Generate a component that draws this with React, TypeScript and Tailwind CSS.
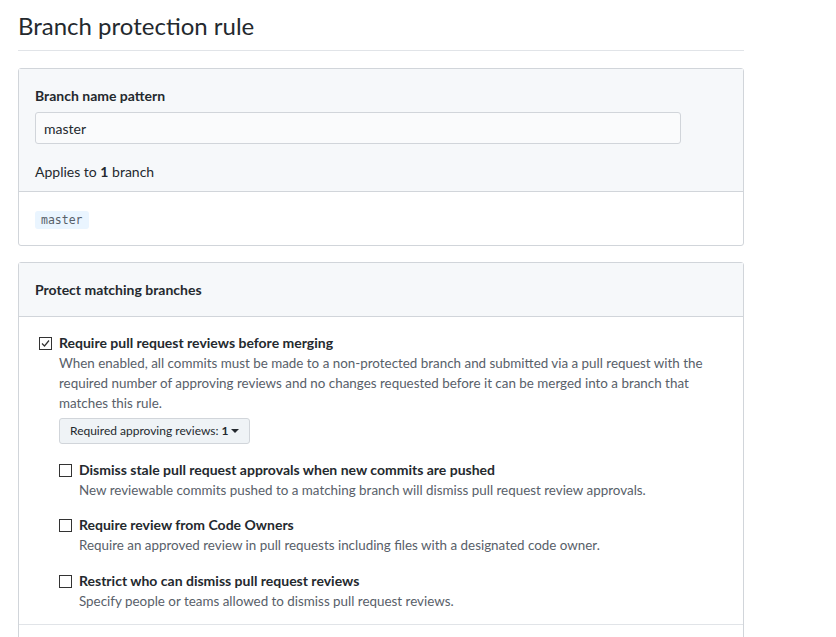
import { useState } from 'react';

const font = { fontFamily: 'Lato, "Noto Sans", "Liberation Sans", sans-serif' };

type Option = {
  title: string;
  note: string;
  gap: string;
};

const subOptions: Option[] = [
  {
    title: 'Dismiss stale pull request approvals when new commits are pushed',
    note: 'New reviewable commits pushed to a matching branch will dismiss pull request review approvals.',
    gap: 'mt-[16px]',
  },
  {
    title: 'Require review from Code Owners',
    note: 'Require an approved review in pull requests including files with a designated code owner.',
    gap: 'mt-[15px]',
  },
  {
    title: 'Restrict who can dismiss pull request reviews',
    note: 'Specify people or teams allowed to dismiss pull request reviews.',
    gap: 'mt-[16px]',
  },
];

const Checkbox = ({ checked }: { checked?: boolean }) => (
  <span className="flex h-[13px] w-[13px] shrink-0 items-center justify-center border border-[#333] bg-white">
    {checked && (
      <svg width="11" height="11" viewBox="0 0 11 11" fill="none">
        <path d="M2 5.5 L4.5 8 L9 2.5" stroke="#333" strokeWidth="1.2" />
      </svg>
    )}
  </span>
);

const App = () => {
  const [pattern, setPattern] = useState('master');

  return (
    <div className="min-h-screen bg-white text-[#24292e]" style={font}>
      <div className="w-[726px] pl-[18px] box-content">
        <h1 className="border-b border-[#e1e4e8] pt-[10px] pb-[8px] text-[24px] leading-[32px] font-normal">
          Branch protection rule
        </h1>

        <div className="mt-[17px] rounded-[3px] border border-[#d1d5da]">
          <div className="border-b border-[#d1d5da] bg-[#f6f8fa] px-4 pt-[16px] pb-[9px]">
            <label className="block text-[14px] leading-[21px] font-bold">Branch name pattern</label>
            <input
              value={pattern}
              onChange={(e) => setPattern(e.target.value)}
              className="mt-[6px] h-[32px] w-[646px] rounded-[3px] border border-[#d1d5da] bg-[#fafbfc] px-2 text-[14px] text-[#24292e] outline-none"
              style={font}
            />
            <p className="mt-[18px] text-[14px] leading-[20px]">
              Applies to <span className="font-bold">1</span> branch
            </p>
          </div>
          <div className="px-4 pt-[19px] pb-[16px]">
            <code
              className="block w-fit rounded-[3px] bg-[#eaf5ff] px-[6px] text-[11.5px] leading-[18px] text-[#586069]"
              style={{ fontFamily: '"DejaVu Sans Mono", "Liberation Mono", monospace' }}
            >
              master
            </code>
          </div>
        </div>

        <div className="mt-[16px] rounded-t-[3px] border border-[#d1d5da]">
          <div className="border-b border-[#d1d5da] bg-[#f6f8fa] px-4 py-4 text-[14px] leading-[21px] font-bold">
            Protect matching branches
          </div>
          <div className="border-b border-[#e1e4e8] px-4 pt-[16px] pb-[13px]">
            <div className="flex pl-[4px]">
              <div className="pt-[4px]">
                <Checkbox checked />
              </div>
              <div className="pl-[7px]">
                <div className="text-[14px] leading-[20px] font-bold">Require pull request reviews before merging</div>
                <p className="text-[13.4px] leading-[20px] text-[#586069]">
                  When enabled, all commits must be made to a non-protected branch and submitted via a pull request with the
                  <br />
                  required number of approving reviews and no changes requested before it can be merged into a branch that
                  <br />
                  matches this rule.
                </p>
                <button
                  type="button"
                  className="mt-[5px] flex h-[26px] items-center gap-[3px] rounded-[3px] border border-[#d1d5da] bg-[#eff3f6] px-[10px] text-[12px] text-[#24292e]"
                  style={font}
                >
                  Required approving reviews: <span className="font-bold">1</span>
                  <svg width="8" height="6" viewBox="0 0 8 6">
                    <path d="M0 1 L8 1 L4 5 Z" fill="#24292e" />
                  </svg>
                </button>

                {subOptions.map((opt) => (
                  <div key={opt.title} className={`${opt.gap} flex`}>
                    <div className="pt-[4px]">
                      <Checkbox />
                    </div>
                    <div className="pl-[7px]">
                      <div className="text-[14px] leading-[20px] font-bold">{opt.title}</div>
                      <p className="text-[13.4px] leading-[20px] text-[#586069]">{opt.note}</p>
                    </div>
                  </div>
                ))}
              </div>
            </div>
          </div>
          <div className="h-[20px]" />
        </div>
      </div>
    </div>
  );
};

export default App;
